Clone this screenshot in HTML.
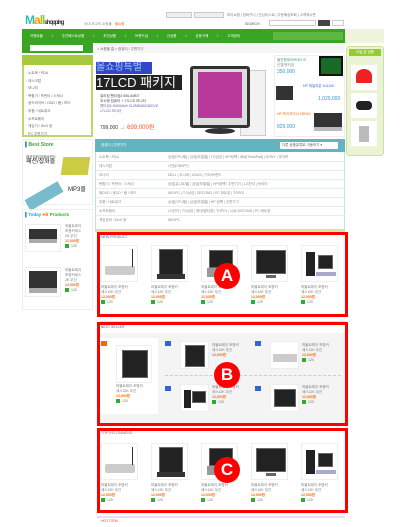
<!DOCTYPE html><html><head><meta charset="utf-8"><style>
*{margin:0;padding:0;box-sizing:border-box}
body{width:400px;height:527px;background:#fff;position:relative;overflow:hidden;font-family:"Liberation Sans","Noto Sans CJK KR",sans-serif;font-size:4px;color:#555}
.a{position:absolute}
.red{border:3px solid #f00}
.img{position:absolute;border:1px solid #eee;background:#fff}
.mon{position:absolute;background:#222;border:1px solid #666}
.t{position:absolute;font-size:3.5px;color:#777;line-height:5px;width:40px}
.p{color:#f60;font-weight:bold}
.g{display:inline-block;width:4px;height:4px;background:#3a3;vertical-align:middle;margin-right:2px}
.circ{position:absolute;width:26px;height:26px;border-radius:50%;background:#f00;color:#fff;font-weight:bold;font-size:17px;text-align:center;line-height:26px}
.row{position:absolute;left:96px;width:249px;height:9px;border-bottom:1px solid #e4eef0;font-size:3.5px;color:#888;line-height:9px}
.row span{position:absolute;left:3px}.row b{font-weight:normal;position:absolute;left:72px}
.li{position:absolute;left:26px;font-size:3.5px;color:#666}
</style></head><body>
<div class="a" style="left:25px;top:13px;font-size:12px;font-weight:bold;color:#3bb;letter-spacing:-1px">M<span style="color:#f90">a</span><span style="color:#9c3">ll</span><span style="font-size:6px;color:#333">shopping</span></div>
<div class="a" style="left:84px;top:22px;font-size:3.5px;color:#888">국내 최고의 쇼핑몰 · <span style="color:#f60">몰쇼핑</span></div>
<div class="a" style="left:166px;top:12px;width:26px;height:6px;border:1px solid #ccc;background:#eee"></div>
<div class="a" style="left:194px;top:12px;width:30px;height:6px;border:1px solid #ccc;background:#eee"></div>
<div class="a" style="left:227px;top:13px;font-size:3.5px;color:#777">마이쇼핑 | 장바구니 | 관심리스트 | 주문배송조회 | 고객게시판</div>
<div class="a" style="left:245px;top:22px;font-size:3.5px;color:#555">SEARCH</div>
<div class="a" style="left:269px;top:20px;width:47px;height:6px;border:1px solid #ccc"></div>
<div class="a" style="left:318px;top:20px;width:12px;height:6px;background:#444"></div>
<div class="a" style="left:332px;top:20px;width:12px;height:6px;border:1px solid #ccc"></div>
<div class="a" style="left:22px;top:29px;width:323px;height:14px;background:#3aa523"></div>
<div class="a" style="left:345px;top:29px;width:39px;height:14px;background:#eef5dc"></div>
<div class="a" style="left:30px;top:34px;font-size:3.5px;color:#fff;word-spacing:8px;white-space:nowrap">이벤트몰 / 주간베스트상품 / 추천상품 / 브랜드샵 / 신상품 / 공동구매 / 고객센터</div>
<div class="a" style="left:273px;top:32px;width:70px;height:8px;background:#5cb840"></div>
<div class="a" style="left:22px;top:43px;width:71px;height:10px;background:#3aa523"></div>
<div class="a" style="left:30px;top:45px;width:53px;height:6px;background:#fff"></div>
<div class="a" style="left:95px;top:43px;width:250px;height:10px;background:#f6f6f6"></div>
<div class="a" style="left:98px;top:47px;font-size:3.5px;color:#666">• 쇼핑몰 홈 &gt; 컴퓨터 / 주변기기</div>
<div class="a" style="left:22px;top:55px;width:71px;height:82px;border:2px solid #bcd86a;background:#fff"></div>
<div class="a" style="left:22px;top:55px;width:71px;height:10px;background:#a6c940"></div>
<div class="li" style="top:70px;line-height:7.6px">· 노트북 / PDA<br>· 데스크탑<br>· 모니터<br>· 복합기 / 프린터 / 스캐너<br>· 광드라이브 / ODD / 램 / 보드<br>· 부품 / 네트워크<br>· 소프트웨어<br>· 게임기 / DivX 등<br>· PC 주변기기</div>
<div class="a" style="left:95px;top:55px;width:176px;height:82px;background:#fff"></div>
<div class="a" style="left:96px;top:62px;width:56px;height:12px;background:#3446c8;color:#9cf;font-size:10px;line-height:12px">몰쇼핑특별</div>
<div class="a" style="left:96px;top:75px;width:86px;height:15px;background:#222;color:#fff;font-size:13px;line-height:15px">17LCD 패키지</div>
<div class="a" style="left:100px;top:94px;font-size:3.5px;color:#444;line-height:5px">워리컴 펜티엄4 506-64BIT<br>초소형 컴퓨터 + 17LCD 모니터<br><span style="color:#66a">펜티엄4 506/64bit/ 512MB/80GB/DVD<br>17LCD 모니터</span></div>
<div class="a" style="left:100px;top:122px;font-size:5px;color:#333">799,000 <span style="color:#f52;font-size:6px">→ 699,000원</span></div>
<div class="a" style="left:240px;top:70px;width:26px;height:66px;background:#f2f2f2;border:1px solid #ccc"></div>
<div class="a" style="left:190px;top:66px;width:60px;height:62px;background:#ddd;border:3px solid #333;border-radius:3px"></div>
<div class="a" style="left:198px;top:72px;width:44px;height:46px;background:#b73a9a"></div>
<div class="a" style="left:205px;top:128px;width:30px;height:6px;background:#333;border-radius:50%"></div>
<div class="a" style="left:274px;top:55px;width:71px;height:82px;background:#fff;border:1px solid #eee"></div>
<div class="a" style="left:277px;top:58px;font-size:3.5px;color:#396;line-height:5px">올인원세이브데스크<br><span style="color:#888">인텔/펜티엄</span></div>
<div class="a" style="left:277px;top:69px;font-size:5px;color:#39c">350,000</div>
<div class="mon" style="left:319px;top:56px;width:24px;height:20px;background:#1a6a2a;border:2px solid #111"></div>
<div class="a" style="left:276px;top:86px;width:17px;height:14px;background:#333"></div>
<div class="a" style="left:303px;top:84px;font-size:3.5px;color:#36c">HP 파빌리온 A1112K</div>
<div class="a" style="left:318px;top:96px;font-size:5px;color:#39c">1,029,000</div>
<div class="a" style="left:277px;top:112px;font-size:3.5px;color:#f60">HP 프리자이너 C8FA0</div>
<div class="a" style="left:277px;top:124px;font-size:5px;color:#39c">829,000</div>
<div class="a" style="left:314px;top:113px;width:28px;height:18px;background:#333;border-bottom:4px solid #bbb"></div>
<div class="a" style="left:346px;top:46px;width:38px;height:110px;background:#eaf3d4;border:1px solid #cde0a0;border-radius:3px"></div>
<div class="a" style="left:349px;top:49px;width:32px;height:7px;background:#9c3;color:#fff;font-size:3.5px;text-align:center;line-height:7px">오늘 본 상품</div>
<div class="a" style="left:351px;top:65px;width:26px;height:25px;background:#fff"><div class="a" style="left:5px;top:4px;width:16px;height:14px;background:#e22;border-radius:50% 50% 10% 10%"></div></div>
<div class="a" style="left:351px;top:93px;width:26px;height:25px;background:#fff"><div class="a" style="left:5px;top:8px;width:16px;height:9px;background:#222;border-radius:4px"></div></div>
<div class="a" style="left:351px;top:121px;width:26px;height:25px;background:#fff"><div class="a" style="left:8px;top:5px;width:10px;height:16px;background:#bbb"></div></div>
<div class="a" style="left:22px;top:139px;width:71px;height:66px;border:1px solid #eee"></div>
<div class="a" style="left:25px;top:142px;font-size:5px;color:#3a3;font-weight:bold"><span style="color:#39c">▌</span>Best Store</div>
<div class="a" style="left:26px;top:155px;font-size:3.5px;color:#555;line-height:5px">패션잡화/잡화브랜드<br><span style="font-size:6px;color:#222">패션/잡화몰</span></div>
<div class="a" style="left:62px;top:157px;width:27px;height:18px;background:#cc4;transform:skew(-8deg)"></div>
<div class="a" style="left:25px;top:190px;width:38px;height:12px;background:#7bc;transform:rotate(-30deg)"></div>
<div class="a" style="left:68px;top:184px;font-size:6px;color:#222">MP3몰</div>
<div class="a" style="left:22px;top:209px;width:71px;height:101px;border:1px solid #eee"></div>
<div class="a" style="left:25px;top:212px;font-size:4.5px;color:#39c;font-weight:bold">▌Today <span style="color:#f60">Hit</span> <span style="color:#3a3">Products</span></div>
<div class="a" style="left:25px;top:224px;width:36px;height:28px;border:1px solid #eee"></div>
<div class="a" style="left:29px;top:229px;width:28px;height:14px;background:#333;border-bottom:4px solid #aaa"></div>
<div class="t" style="left:65px;top:224px;width:28px">마블트레이<br>조명커세스<br>2K 무선<br><span class="p">12,000원</span><br><i class="g"></i>120</div>
<div class="a" style="left:25px;top:267px;width:36px;height:30px;border:1px solid #eee"></div>
<div class="a" style="left:29px;top:271px;width:28px;height:22px;background:#333;border-bottom:5px solid #aaa"></div>
<div class="t" style="left:65px;top:268px;width:28px">마블트레이<br>조명커세스<br>2K 무선<br><span class="p">12,000원</span><br><i class="g"></i>120</div>
<div class="a" style="left:95px;top:139px;width:250px;height:91px;border:1px solid #bfe0e6"></div>
<div class="a" style="left:95px;top:139px;width:250px;height:13px;background:#62b4c0"></div>
<div class="a" style="left:101px;top:143px;font-size:3.5px;color:#fff">컴퓨터 | 주변기기</div>
<div class="a" style="left:280px;top:142px;width:58px;height:7px;background:#fff;font-size:3.5px;color:#555;line-height:7px;padding-left:2px">다른 상품분류로 이동하기 ▾</div>
<div class="row" style="top:153px"><span>노트북 / PDA</span><b>삼성[CPU별] | 삼성[모델별] | TG삼성 | HP/컴팩 | IBM[ThinkPad] | SONY | 후지쯔</b></div>
<div class="row" style="top:162px"><span>데스크탑</span><b>나인[EIN0FF]</b></div>
<div class="row" style="top:171px"><span>모니터</span><b>DELL | 도시바 | ASUS | 기타/브랜드</b></div>
<div class="row" style="top:180px"><span>복합기 / 프린터 / 스캐너</span><b>삼성[유니트별] | 삼성[모델별] | HP/컴팩 | 주변기기 | LG전자 | 브라더</b></div>
<div class="row" style="top:189px"><span>광DVD / 광CD / 램 / 보드</span><b>NEXPC | TG삼성 | SECOND | PC 파트장 | TOPOI</b></div>
<div class="row" style="top:198px"><span>부품 / 네트워크</span><b>삼성[CPU별] | 삼성[모델별] | HP 컴팩 | 주변기기</b></div>
<div class="row" style="top:207px"><span>소프트웨어</span><b>LG전자 | TG삼성 | 현대/멀티캡 | TOPOI | 시큐 SECOND | PC 파트장</b></div>
<div class="row" style="top:216px;border:0"><span>게임장비 / DivX 등</span><b>NEXPC</b></div>
<div class="a" style="left:95px;top:230px;width:250px;height:2px;background:#d6e6a8"></div>

<div class="a red" style="left:97px;top:232px;width:251px;height:85px"></div>
<div class="a" style="left:101px;top:235px;font-size:3.5px;color:#36c">NEW PRODUCT</div>
<div class="a" style="left:100px;top:321px;width:246px;height:1px;background:#ddd"></div>

<div class="a red" style="left:97px;top:322px;width:251px;height:104px"></div>
<div class="a" style="left:101px;top:325px;font-size:3.5px;color:#36c">BEST SELLER</div>
<div class="a" style="left:100px;top:333px;width:245px;height:90px;background:#f4f4f4"></div>
<div class="a" style="left:100px;top:338px;width:58px;height:76px;background:#fff"></div>
<div class="a" style="left:101px;top:341px;width:6px;height:5px;background:#f60"></div>
<div class="img" style="left:116px;top:345px;width:36px;height:38px"><div class="mon" style="left:5px;top:4px;width:26px;height:28px"></div></div>
<div class="t" style="left:116px;top:384px">마블트레이 조명커<br>세스12K 무선<br><span class="p">12,000원</span><br><i class="g"></i>120</div>
<div class="a" style="left:165px;top:341px;width:6px;height:5px;background:#36c"></div>
<div class="img" style="left:180px;top:341px;width:29px;height:28px"><div class="mon" style="left:4px;top:3px;width:20px;height:22px"></div></div>
<div class="t" style="left:212px;top:343px">마블트레이 조명커<br>세스12K 무선<br><span class="p">12,000원</span></div>
<div class="a" style="left:255px;top:341px;width:6px;height:5px;background:#36c"></div>
<div class="img" style="left:270px;top:341px;width:29px;height:28px"><div class="a" style="left:2px;top:12px;width:24px;height:8px;background:#ccc"></div></div>
<div class="t" style="left:302px;top:343px">마블트레이 조명커<br>세스12K 무선<br><span class="p">12,000원</span><br><i class="g"></i>120</div>
<div class="a" style="left:165px;top:375px;width:176px;border-top:1px dashed #ccc"></div>
<div class="a" style="left:165px;top:386px;width:6px;height:5px;background:#36c"></div>
<div class="img" style="left:180px;top:384px;width:29px;height:28px"><div class="a" style="left:3px;top:5px;width:7px;height:18px;background:#222"></div><div class="mon" style="left:11px;top:6px;width:14px;height:12px"></div></div>
<div class="t" style="left:212px;top:385px">마블트레이 조명커<br>세스12K 무선<br><span class="p">12,000원</span><br><i class="g"></i>120</div>
<div class="a" style="left:255px;top:386px;width:6px;height:5px;background:#36c"></div>
<div class="img" style="left:270px;top:384px;width:29px;height:28px"><div class="mon" style="left:3px;top:4px;width:22px;height:18px"></div></div>
<div class="t" style="left:302px;top:385px">마블트레이 조명커<br>세스12K 무선<br><span class="p">12,000원</span><br><i class="g"></i>120</div>

<div class="a red" style="left:97px;top:428px;width:251px;height:85px"></div>
<div class="a" style="left:101px;top:431px;font-size:3.5px;color:#777"><span style="color:#f33">TOP</span> RECOMMEND</div>
<div class="a" style="left:97px;top:516px;width:248px;height:11px;border-top:2px solid #ecdcf0"></div>
<div class="a" style="left:101px;top:519px;font-size:3.5px;color:#f33">HOT ITEM</div>

<div id="prods"></div>
<div class="circ" style="left:214px;top:263px">A</div>
<div class="circ" style="left:214px;top:362px">B</div>
<div class="circ" style="left:214px;top:457px">C</div>
<script>
var kinds=['router','pc1','lap','mon','tower'];
function item(x,y,k){
 var h='<div class="img" style="left:'+x+'px;top:'+y+'px;width:37px;height:37px">';
 if(k=='router')h+='<div class="a" style="left:3px;top:20px;width:30px;height:9px;background:#ccc;border-radius:2px"></div><div class="a" style="left:30px;top:3px;width:1px;height:18px;background:#333"></div>';
 if(k=='pc1')h+='<div class="mon" style="left:7px;top:3px;width:24px;height:26px"></div><div class="a" style="left:5px;top:28px;width:28px;height:5px;background:#333"></div>';
 if(k=='lap')h+='<div class="mon" style="left:7px;top:4px;width:24px;height:18px"></div><div class="a" style="left:5px;top:22px;width:28px;height:9px;background:#999"></div>';
 if(k=='mon')h+='<div class="mon" style="left:4px;top:4px;width:30px;height:24px"></div><div class="a" style="left:14px;top:29px;width:10px;height:3px;background:#666"></div>';
 if(k=='tower')h+='<div class="a" style="left:4px;top:6px;width:9px;height:24px;background:#222"></div><div class="mon" style="left:16px;top:9px;width:15px;height:14px"></div><div class="a" style="left:14px;top:26px;width:20px;height:4px;background:#aac"></div>';
 h+='</div><div class="t" style="left:'+x+'px;top:'+(y+40)+'px">마블트레이 조명커<br>세스12K 무선<br><span class="p">12,000원</span><br><i class="g"></i>120</div>';
 return h;}
var s='';
[245,443].forEach(function(y){for(var i=0;i<5;i++)s+=item(101+i*50,y,kinds[i]);});
document.getElementById('prods').innerHTML=s;
</script>
</body></html>
